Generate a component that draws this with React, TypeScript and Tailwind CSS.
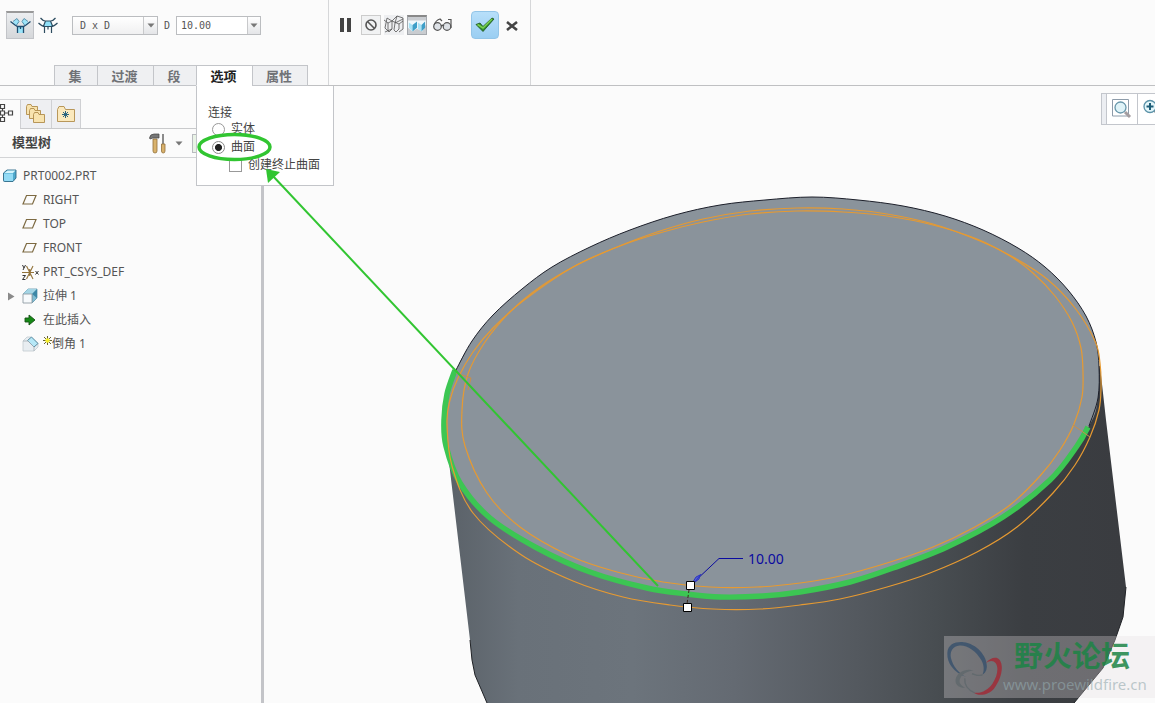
import type { ReactNode } from "react";

const BODY_PATH =
  "M449 462 L470 640 L472 660 L475 675 L487 703 L1074 703 L1103 668 L1115 640 L1123 617 L1126 587 L1106 420 L1100 366 Z";

const TOP_FACE =
  "456,370 472,341 493,315 522,289 552,267 590,247 630,230 675,215 720,205 765,200 812,197 858,200 903,206 945,216 983,230 1018,248 1045,267 1068,290 1086,316 1096,342 1099,367 1098,398 1089,426 1050,480 1003,517 947,547 893,568 850,583 800,592 763,596 720,597 687,594 647,588 590,573 537,548 490,519 460,483 446,446 444,420 447,394 456,370";

const HIDDEN_EDGE =
  "456,370 472,341 493,315 522,289 552,267 590,247 630,230 675,215 720,205 765,200 812,197 858,200 903,206 945,216 983,230 1018,248 1045,267 1068,290 1086,316 1096,342 1099,367 1098,398 1089,426";

const SELECTED_EDGE =
  "1088,427 1077,446 1050,480 1003,517 947,547 893,568 850,582 800,592 763,596 720,597 687,594 647,588 590,572 537,548 490,518 460,483 446,446 444,420 447,394 455,370";

const INNER_PREVIEW =
  "797,211 750,214 703,222 663,232 620,246 577,265 540,287 510,312 485,342 468,374 462,410 465,446 487,493 520,527 570,556 617,572 663,582 710,587 757,587 800,583 840,576 887,563 933,547 973,528 1010,505 1040,476 1060,450 1074,424 1082,397 1083,373 1081,348 1072,322 1055,296 1033,273 1010,256 977,239 933,225 887,216 843,212 797,211";

const OUTER_PREVIEW =
  "797,208 750,211 703,219 660,231 617,247 573,267 523,301 493,328 473,352 458,378 450,400 447,423 452,466 473,513 520,554 573,581 623,597 670,605 713,609 760,609 800,605 840,599 887,587 930,573 977,552 1017,527 1053,493 1075,465 1090,437 1099,410 1101,388 1100,363 1095,341 1075,308 1047,279 1013,257 980,241 933,224 887,214 843,209 797,208";

/** Smooth cubic path running through every listed point. */
function curve(list: string): string {
  const p = list.split(" ").map((s) => s.split(",").map(Number));
  const closed = p[0][0] === p[p.length - 1][0] && p[0][1] === p[p.length - 1][1];
  const last = p.length - 1;
  const at = (i: number) => {
    if (i < 0) return closed ? p[last - 1] : p[0];
    if (i > last) return closed ? p[1] : p[last];
    return p[i];
  };
  let d = `M${p[0][0]} ${p[0][1]}`;
  for (let i = 0; i < last; i++) {
    const [a, b, c, e] = [at(i - 1), at(i), at(i + 1), at(i + 2)];
    d += ` C${b[0] + (c[0] - a[0]) / 6} ${b[1] + (c[1] - a[1]) / 6} ${c[0] - (e[0] - b[0]) / 6} ${c[1] - (e[1] - b[1]) / 6} ${c[0]} ${c[1]}`;
  }
  return d;
}

function Scene() {
  return (
    <svg className="block h-full w-full" role="img" aria-label="圆柱倒角预览">
      <defs>
        <linearGradient id="side" gradientUnits="userSpaceOnUse" x1="450" y1="0" x2="1126" y2="0">
          <stop offset="0" stopColor="#5b6269" />
          <stop offset="0.1" stopColor="#697179" />
          <stop offset="0.27" stopColor="#6c747c" />
          <stop offset="0.42" stopColor="#646a72" />
          <stop offset="0.6" stopColor="#54595f" />
          <stop offset="0.72" stopColor="#484d51" />
          <stop offset="0.85" stopColor="#3b3e42" />
          <stop offset="1" stopColor="#3a3c40" />
        </linearGradient>
      </defs>
      <g transform="translate(-265 -86)" fill="none">
        <path d={BODY_PATH} fill="url(#side)" />
        <path d="M470 640 L472 660 L475 675 L487 703 M1126 587 L1123 617 L1115 640 L1103 668 L1074 703" stroke="#202226" />
        <path d={curve(TOP_FACE)} fill="#8a939b" />
        <path d={curve(HIDDEN_EDGE)} stroke="#1c1f2a" />
        <path d={curve(INNER_PREVIEW)} stroke="#e69a32" strokeWidth="1.2" />
        <path d={curve(SELECTED_EDGE)} stroke="#3cc653" strokeWidth="5.5" />
        <path d={curve(OUTER_PREVIEW)} stroke="#e69a32" strokeWidth="1.2" />
        <path d="M1073 425 L1090 437 M456 373 L471 378 L468 390" stroke="#c98f48" />
        <path d="M743 558.500 H719 L693 583" stroke="#0b0ba0" />
        <path d="M691 585 L696 577 L700 575 L699 579 Z M695 582 L701 574" stroke="#2c35c4" fill="#5560d0" />
        <text x="748" y="564" fill="#0b0ba0" className="font-['Noto_Sans'] text-[14px]">10.00</text>
        <path d="M689 590 L687 604" stroke="#3b2a1a" strokeDasharray="3 2" />
        <path d="M686.500 581.500 h8 v8 h-8 Z M683.500 603.500 h8 v8 h-8 Z" fill="#fff" stroke="#000" />
      </g>
    </svg>
  );
}

function Annotation() {
  return (
    <svg className="pointer-events-none absolute inset-0 h-full w-full" aria-hidden="true">
      <ellipse cx="234.500" cy="147" rx="35.500" ry="12.500" fill="none" stroke="#31c531" strokeWidth="3.500" />
      <path d="M272 175 L658 586" stroke="#31c531" strokeWidth="2" />
      <path d="M266 169 L268 183 L280 172 Z" fill="#31c531" />
    </svg>
  );
}

function Caret() {
  return (
    <svg width="8" height="5" viewBox="0 0 8 5" aria-hidden="true">
      <path d="M0.500 0.500 H7.500 L4 4.500 Z" fill="#777" />
    </svg>
  );
}

function SetsIcon() {
  return (
    <svg width="21" height="17" viewBox="0 0 21 17" fill="none" aria-hidden="true">
      <path d="M3 5 L7 2 L9 5 L6 8.500 Z M18 5 L14 2 L12 5 L15 8.500 Z M7 9 H14 V16 H7 Z" fill="#9be4f9" />
      <path d="M0.500 4.500 L5 8 L7.500 9.500 H13.500 L16 8 L20.500 4.500 M7.500 9 V16 M13.500 9 V16 M10.500 9 V12" stroke="#1f4d70" strokeWidth="1.3" />
      <path d="M3 4.500 L7 1.500 L9 4.500 L6.500 8 M18 4.500 L14 1.500 L12 4.500 L14.500 8" stroke="#4a8aa8" strokeWidth="0.9" />
    </svg>
  );
}

function TransitionIcon() {
  return (
    <svg width="20" height="17" viewBox="0 0 20 17" fill="none" aria-hidden="true">
      <path d="M7.500 4 H12.500 L14.500 9 H5.500 Z" fill="#8fe0f8" />
      <path d="M0.500 6 Q4 9.500 7 9.500 H13 Q16 9.500 19.500 6 M2.500 1 Q5 4 7.500 4 H12.500 Q15 4 17.500 1 M7.500 4 L5.500 9 M12.500 4 L14.500 9 M6.500 9.500 V16 M13.500 9.500 V16 M10 9.500 V12.500" stroke="#2d4c60" strokeWidth="1.2" />
    </svg>
  );
}

function WireIcon() {
  return (
    <svg width="20" height="20" viewBox="0 0 20 20" fill="none" stroke="#555" aria-hidden="true">
      <path d="M0 5 L4 8 L8 6 V14 L5 17 L1 13 M4 8 V16 M3 3 L8 6 L13 1 M3 3 L1 13 M8 6 L15 9 V14 L12 17 L10 15 M13 1 L19 3 V14 L15 17 M19 4 L11 8 L10 15 M8 14 L1 17 M15 9 L19 6 M13 1 L11 8" strokeWidth="0.8" />
    </svg>
  );
}

function ShadedIcon() {
  return (
    <svg width="20" height="20" viewBox="0 0 20 20" aria-hidden="true">
      <path d="M0 4 H20 V8 L16 16 L10 13 L5 16 L0 12 Z" fill="#f1f8fb" />
      <path d="M1 6 L5 9 V16 L1 12 Z M11 6 L15 9 V16 L11 13 Z" fill="#a9e3f6" />
      <path d="M5 9 L10 5 V12 L5 16 Z M15 9 L19 5 V12 L15 16 Z" fill="#3f9fc8" />
    </svg>
  );
}

function GlassesIcon() {
  return (
    <svg width="20" height="14" viewBox="0 0 20 14" fill="none" stroke="#555" strokeWidth="1.2" aria-hidden="true">
      <circle cx="4.500" cy="8.500" r="3.800" fill="#dde1e6" />
      <circle cx="14" cy="8.500" r="3.800" fill="#dde1e6" />
      <path d="M8 8 Q9.500 6.500 11 8 M1 7 Q3 2 7 1 L9 3 M18 10 V1.500 H15" />
    </svg>
  );
}

function CheckIcon() {
  return (
    <svg width="20" height="16" viewBox="0 0 20 16" aria-hidden="true">
      <path d="M1 7.500 L5 6 L8 9.500 L17 1 L19 2 L8 14.500 Z" fill="#2f8f2c" stroke="#1c4f1c" strokeWidth="0.8" />
      <path d="M2.500 7.500 L8 11 L17 2" fill="none" stroke="#7ad050" strokeWidth="1.5" />
    </svg>
  );
}

function FolderShape() {
  return (
    <path d="M0.500 2.500 L1.500 0.500 H5 L6 2.500 H11.500 V10.500 H0.500 Z" fill="#f8e3ae" stroke="#b08c4c" strokeWidth="0.9" />
  );
}

function FoldersIcon() {
  return (
    <svg width="20" height="20" viewBox="0 0 20 20" aria-hidden="true">
      <FolderShape />
      <g transform="translate(3 4)"><FolderShape /></g>
      <g transform="translate(7 8)"><FolderShape /></g>
    </svg>
  );
}

function FavoritesIcon() {
  return (
    <svg width="18" height="16" viewBox="0 0 18 16" aria-hidden="true">
      <path d="M0.500 3.500 L2 0.500 H7 L8.500 3.500 H17.500 V15.500 H0.500 Z" fill="#fbe9bd" stroke="#b8975a" />
      <path d="M8.500 5 V12 M5 8.500 H12 M6 6 L11 11 M11 6 L6 11" stroke="#2b6580" />
    </svg>
  );
}

function TreeTabIcon() {
  return (
    <svg width="14" height="20" viewBox="0 0 14 20" fill="none" stroke="#444" strokeWidth="1.2" className="mb-[3px]" aria-hidden="true">
      <path d="M0.500 1.500 H4.500 V5.500 H0.500 Z M0.500 8 H4.500 V12 H0.500 Z M8.500 8 H12.500 V12 H8.500 Z M0.500 14.500 H4.500 V18.500 H0.500 Z M2.500 5.500 V8 M2.500 12 V14.500 M4.500 10 H8.500" />
    </svg>
  );
}

function ToolsIcon() {
  return (
    <svg width="18" height="21" viewBox="0 0 18 21" aria-hidden="true">
      <path d="M4 6 H8 V18 Q8 20 6 20 Q4 20 4 18 Z" fill="#d9b26c" stroke="#92703a" strokeWidth="0.8" />
      <path d="M0.500 5 Q1 1 5 1 H10 V5 H4 L1 6 Z" fill="#777" stroke="#444" strokeWidth="0.7" />
      <path d="M14 1 V11" stroke="#666" strokeWidth="1.5" />
      <path d="M12.500 11 H16 V18 Q16 20 14.200 20 Q12.500 20 12.500 18 Z" fill="#d9b26c" stroke="#92703a" strokeWidth="0.8" />
    </svg>
  );
}

function PartIcon() {
  return (
    <svg width="14" height="14" viewBox="0 0 14 14" stroke="#2c6a88" strokeWidth="0.9" aria-hidden="true">
      <path d="M0.500 4 L4 1 H13 V9 L10 12.500 H1.500 Q0.500 12.500 0.500 11.500 Z" fill="#4fa9cc" />
      <path d="M1 4.500 H10 V12 H2 Q1 12 1 11 Z" fill="#93dbf5" stroke="none" />
      <path d="M1.500 4 L4.500 1.500 H12.500 L10 4 Z" fill="#d4f4fc" stroke="none" />
    </svg>
  );
}

function PlaneIcon() {
  return (
    <svg width="16" height="12" viewBox="0 0 16 12" fill="none" aria-hidden="true">
      <path d="M4.500 1.500 H14 L10.500 10 H1 Z" stroke="#7d6a42" strokeWidth="1.2" />
    </svg>
  );
}

function CsysIcon() {
  return (
    <svg width="17" height="17" viewBox="0 0 17 17" fill="none" aria-hidden="true">
      <path d="M0 8.500 H12 M4.500 2 L11 15 M11 2 L4.500 15 M7.700 5 V12" stroke="#93733a" strokeWidth="1.1" />
      <path d="M0.500 1 L2 4 M3.500 1 L1 6 M0.500 11.500 H3.500 L0.500 15.500 H3.500 M13.500 7 L16.500 10.500 M16.500 7 L13.500 10.500" stroke="#333" />
    </svg>
  );
}

function ExtrudeIcon() {
  return (
    <svg width="16" height="16" viewBox="0 0 16 16" aria-hidden="true">
      <path d="M1 6 L6 1 H15 V10 L10 15 V6 Z" fill="#7fbdd3" stroke="#5f95ab" strokeWidth="0.8" />
      <path d="M1 6 L6 1 H15 L10 6 Z" fill="#a4d5e5" />
      <path d="M15 1 L10 6 L15 10 Z" fill="#3d87a6" />
      <path d="M1 6 H10 V15 H1 Z" fill="#f7fafc" stroke="#909ca4" strokeWidth="0.9" />
    </svg>
  );
}

function InsertIcon() {
  return (
    <svg width="12" height="12" viewBox="0 0 12 12" aria-hidden="true">
      <path d="M1 4 H5 V1 L11 6 L5 11 V8 H1 Z" fill="#168a16" stroke="#155015" strokeWidth="0.9" />
    </svg>
  );
}

function ChamferIcon() {
  return (
    <svg width="17" height="16" viewBox="0 0 17 16" aria-hidden="true">
      <path d="M1 5 L5 1 H9 L16 7 V11 L12 15 H1 Z" fill="#e8edf1" stroke="#c3cbd1" strokeWidth="0.8" />
      <path d="M5.500 4.500 L9.500 1 L16 7.500 L12 11 Z" fill="#b6e8f7" stroke="#4c8198" strokeWidth="0.9" />
      <path d="M1 5 H6 L12 11 V15" fill="none" stroke="#a5afb6" strokeWidth="0.8" />
    </svg>
  );
}

function NewMark() {
  return (
    <svg width="9" height="9" viewBox="0 0 9 9" className="-mt-2 shrink-0" aria-hidden="true">
      <path d="M4.500 0 V9 M0 4.500 H9 M1 1 L8 8 M8 1 L1 8" stroke="#55501a" strokeWidth="0.9" />
      <circle cx="4.500" cy="4.500" r="2.200" fill="#f5ee28" />
    </svg>
  );
}

const TABS = ["集", "过渡", "段", "选项", "属性"];

function Toolbar() {
  return (
    <header className="flex h-[86px] border-b border-[#bfc0c2]">
      <div className="flex w-[329px] shrink-0 flex-col justify-between border-r border-[#d6d7d9]">
        <div className="flex items-center pt-[11px] pl-[6px] text-[#555]">
          <button aria-label="集模式" className="flex h-7 w-7 items-center justify-center border border-t-2 border-[#c2c4c8] border-t-[#999] bg-linear-to-b from-[#eceef0] to-[#d5d7da]">
            <SetsIcon />
          </button>
          <button aria-label="过渡模式" className="ml-1 flex h-7 w-5 items-center justify-center">
            <TransitionIcon />
          </button>
          <div className="relative ml-[14px]">
            <select aria-label="倒角类型" defaultValue="DxD" className="block h-[19px] w-[86px] appearance-none border border-[#bbbdc0] bg-linear-to-b from-white to-[#f0f0f1] pl-[7px] font-['DejaVu_Sans_Mono',monospace] text-[10px] leading-[17px]">
              <option value="DxD">D x D</option>
            </select>
            <span className="pointer-events-none absolute inset-y-px right-px flex w-[14px] items-center justify-center border-l border-[#c8c9cb] bg-linear-to-b from-white to-[#e4e5e8]">
              <Caret />
            </span>
          </div>
          <label htmlFor="dist" className="ml-[6px] font-['DejaVu_Sans_Mono',monospace] text-[10px]">D</label>
          <div className="ml-[6px] flex h-[19px] border border-[#bbbdc0]">
            <input id="dist" defaultValue="10.00" className="w-[70px] bg-white pl-1 font-['DejaVu_Sans_Mono',monospace] text-[10px] outline-none" />
            <button aria-label="最近使用的值" className="flex w-[13px] items-center justify-center border-l border-[#c8c9cb] bg-linear-to-b from-white to-[#e4e5e8]">
              <Caret />
            </button>
          </div>
        </div>
        <nav className="flex pl-[54px]">
          {TABS.map((t) => (
            <button
              key={t}
              className={
                "-mb-px h-[21px] border border-r-0 border-[#c3c5c9] pr-[2px] text-[13px] leading-[18px] font-bold last:border-r " +
                (t.length > 1 ? "w-14 " : "w-[43px] ") +
                (t === "选项" ? "relative border-b-white bg-white text-[#222]" : "bg-[#eff0f2] text-[#707276]")
              }
            >
              {t}
            </button>
          ))}
        </nav>
      </div>
      <div className="flex w-[202px] shrink-0 items-start border-r border-[#d6d7d9] pt-[11px] pl-[11px]">
        <button aria-label="暂停" className="flex h-7 w-[11px] items-center justify-between">
          <span className="h-[14px] w-1 bg-[#444]" />
          <span className="h-[14px] w-1 bg-[#444]" />
        </button>
        <div className="ml-[10px] flex h-7 items-center gap-[3px]">
          <button aria-label="无预览" className="flex h-5 w-5 items-center justify-center border border-[#ccc] bg-[#f1f2f3]">
            <svg width="14" height="14" viewBox="0 0 14 14" fill="none" stroke="#555" strokeWidth="1.600" aria-hidden="true">
              <circle cx="7" cy="7" r="5" />
              <path d="M3.500 3.500 L10.500 10.500" />
            </svg>
          </button>
          <button aria-label="未连接预览" className="flex h-5 w-5 items-center justify-center bg-[#eeeff1]"><WireIcon /></button>
          <button aria-label="连接预览" className="flex h-5 w-5 items-center justify-center border border-t-2 border-[#a5a9ae] border-t-[#888] bg-[#c9ccd0]"><ShadedIcon /></button>
          <button aria-label="校验" className="ml-[3px] flex h-5 w-5 items-center justify-center"><GlassesIcon /></button>
        </div>
        <button aria-label="确定" className="ml-[18px] flex h-7 w-7 items-center justify-center rounded-sm border border-[#92c5e8] bg-linear-to-b from-[#b7dffa] to-[#9acef2]">
          <CheckIcon />
        </button>
        <button aria-label="取消" className="mt-px ml-[7px] flex h-7 w-3 items-center justify-center">
          <svg width="12" height="10" viewBox="0 0 12 10" aria-hidden="true">
            <path d="M1 1 L11 9 M11 1 L1 9" stroke="#444" strokeWidth="2.600" />
          </svg>
        </button>
      </div>
    </header>
  );
}

function OptionsPanel() {
  return (
    <div className="absolute top-[86px] left-[196px] h-[100px] w-[138px] border border-t-0 border-[#c3c5c9] bg-white pt-5 pl-[11px] text-[12px] leading-[18px] text-[#444]">
      <fieldset>
        <legend className="leading-[14px]">连接</legend>
        <label className="flex items-center gap-[6px] pl-1">
          <input type="radio" name="attach" className="h-[13px] w-[13px] appearance-none rounded-full border border-[#999] bg-white" />
          实体
        </label>
        <label className="flex items-center gap-[6px] pl-1">
          <input type="radio" name="attach" defaultChecked className="h-[13px] w-[13px] appearance-none rounded-full border border-[#888] bg-white bg-radial from-[#222] from-40% to-transparent to-50%" />
          曲面
        </label>
        <label className="flex items-center gap-[6px] pl-[21px]">
          <input type="checkbox" className="h-[13px] w-[13px] appearance-none border border-[#999] bg-white" />
          创建终止曲面
        </label>
      </fieldset>
    </div>
  );
}

type Row = { icon: ReactNode; label: string; expandable?: boolean; fresh?: boolean };

const ROWS: Row[] = [
  { icon: <PlaneIcon />, label: "RIGHT" },
  { icon: <PlaneIcon />, label: "TOP" },
  { icon: <PlaneIcon />, label: "FRONT" },
  { icon: <CsysIcon />, label: "PRT_CSYS_DEF" },
  { icon: <ExtrudeIcon />, label: "拉伸 1", expandable: true },
  { icon: <InsertIcon />, label: "在此插入" },
  { icon: <ChamferIcon />, label: "倒角 1", fresh: true },
];

function Sidebar() {
  return (
    <aside className="flex w-[264px] shrink-0 flex-col border-r-[3px] border-[#c3c4c8] pt-[13px]">
      <div className="flex h-[30px] border-b border-[#c9cacc]">
        <button aria-label="模型树" className="-mb-px flex w-5 items-center border-t border-[#d5d6d8] bg-[#fbfbfb]"><TreeTabIcon /></button>
        <button aria-label="文件夹浏览器" className="flex w-[31px] items-center justify-center border-t border-l border-[#cfd0d3] bg-[#eeeff2]"><FoldersIcon /></button>
        <button aria-label="收藏夹" className="flex w-[30px] items-center justify-center border-x border-t border-[#cfd0d3] bg-[#eeeff2]"><FavoritesIcon /></button>
      </div>
      <div className="flex h-[29px] items-center border-b border-[#d3d4d6] pl-3">
        <h2 className="flex-1 text-[13px] font-bold text-[#444]">模型树</h2>
        <button aria-label="设置" className="flex items-center gap-2 pr-[9px]"><ToolsIcon /><Caret /></button>
        <button aria-label="显示" className="mr-[49px] h-[19px] w-5 border border-[#b9bbbf] bg-[#e9f3e6]" />
      </div>
      <ul className="pt-[6px] text-[12px] leading-6 text-[#555]">
        <li>
          <div className="flex h-6 items-center gap-[6px] pl-[3px]"><PartIcon />PRT0002.PRT</div>
          <ul>
            {ROWS.map((r) => (
              <li key={r.label} className="flex h-6 items-center">
                <span className="flex w-[21px] justify-center">
                  {r.expandable && (
                    <svg width="8" height="9" viewBox="0 0 8 9" aria-hidden="true"><path d="M1 0.500 L7.500 4.500 L1 8.500 Z" fill="#8a8a8a" /></svg>
                  )}
                </span>
                <span className="flex w-[18px] justify-center">{r.icon}</span>
                <span className="flex items-center pl-1">
                  {r.fresh && <NewMark />}
                  {r.label}
                </span>
              </li>
            ))}
          </ul>
        </li>
      </ul>
    </aside>
  );
}

function ViewTools() {
  return (
    <div className="absolute top-[7px] right-0 flex h-8 w-[54px] overflow-hidden border-y border-l border-[#c3c6cc] bg-[#eceef2] pl-1">
      <button aria-label="重新调整" className="flex w-8 shrink-0 items-center justify-center border-x border-[#c3c6cc] bg-white">
        <svg width="20" height="20" viewBox="0 0 20 20" fill="none" aria-hidden="true">
          <path d="M0.500 0.500 H16.500 V17 H0.500 Z" stroke="#8e9caa" />
          <path d="M13 13 L18 18" stroke="#a49da0" strokeWidth="3" />
          <circle cx="8.500" cy="8.500" r="5.500" fill="#dff3f8" stroke="#6796aa" strokeWidth="1.300" />
        </svg>
      </button>
      <button aria-label="放大" className="flex w-[31px] shrink-0 items-center bg-white pl-1">
        <svg width="20" height="20" viewBox="0 0 20 20" fill="none" aria-hidden="true">
          <path d="M12 11 L18 17" stroke="#8a8f98" strokeWidth="3" />
          <circle cx="8" cy="7.500" r="6" fill="#e3f6fa" stroke="#5b92a8" strokeWidth="1.300" />
          <path d="M8 4 V11 M4.500 7.500 H11.500" stroke="#1d5d78" strokeWidth="2" />
        </svg>
      </button>
    </div>
  );
}

function Watermark() {
  return (
    <div className="absolute right-0 bottom-[5px] flex h-[62px] w-[211px] bg-[#e6dfe0]/30 pt-1 pl-[3px]">
      <svg width="56" height="57" viewBox="0 0 170 172" className="shrink-0 opacity-80" aria-hidden="true">
        <path d="M58 112 C20 98 0 70 1 40 C2 10 28 4 50 6 C90 10 122 48 121 80 C120 95 115 100 108 104 C114 90 112 74 104 60 C88 32 60 14 38 16 C18 18 8 34 12 54 C18 80 36 100 58 112Z" fill="#36506c" />
        <path d="M118 70 C130 54 150 48 160 60 C174 80 164 120 142 148 C126 166 96 172 80 158 C100 164 124 152 138 132 C152 110 158 84 148 70 C140 60 128 62 118 70Z" fill="#a32834" />
        <path d="M80 92 C60 84 30 96 26 120 C24 140 44 146 56 144 C42 138 34 128 40 116 C48 100 64 94 80 92Z" fill="#5f686c" />
        <path d="M54 116 C52 138 66 152 84 160 M76 102 C86 104 100 112 108 104" fill="none" stroke="#5f686c" strokeWidth="4" />
      </svg>
      <div className="flex flex-col">
        <strong className="pl-[11px] font-['Liberation_Sans','Noto_Sans_CJK_SC',sans-serif] text-[29px] leading-[34px] font-bold text-[#1c8445]/85">野火论坛</strong>
        <span className="font-['Noto_Sans',sans-serif] text-[15px] leading-5 text-[#93a9ad]/60">www.proewildfire.cn</span>
      </div>
    </div>
  );
}

export default function App() {
  return (
    <div className="relative flex h-screen flex-col overflow-hidden bg-[#fbfbfb] font-['Noto_Sans','Noto_Sans_CJK_SC',sans-serif]">
      <Toolbar />
      <div className="flex min-h-0 flex-1">
        <Sidebar />
        <main className="relative -ml-px min-w-0 flex-1 overflow-hidden pl-[2px]">
          <Scene />
          <ViewTools />
          <Watermark />
        </main>
      </div>
      <OptionsPanel />
      <Annotation />
    </div>
  );
}
